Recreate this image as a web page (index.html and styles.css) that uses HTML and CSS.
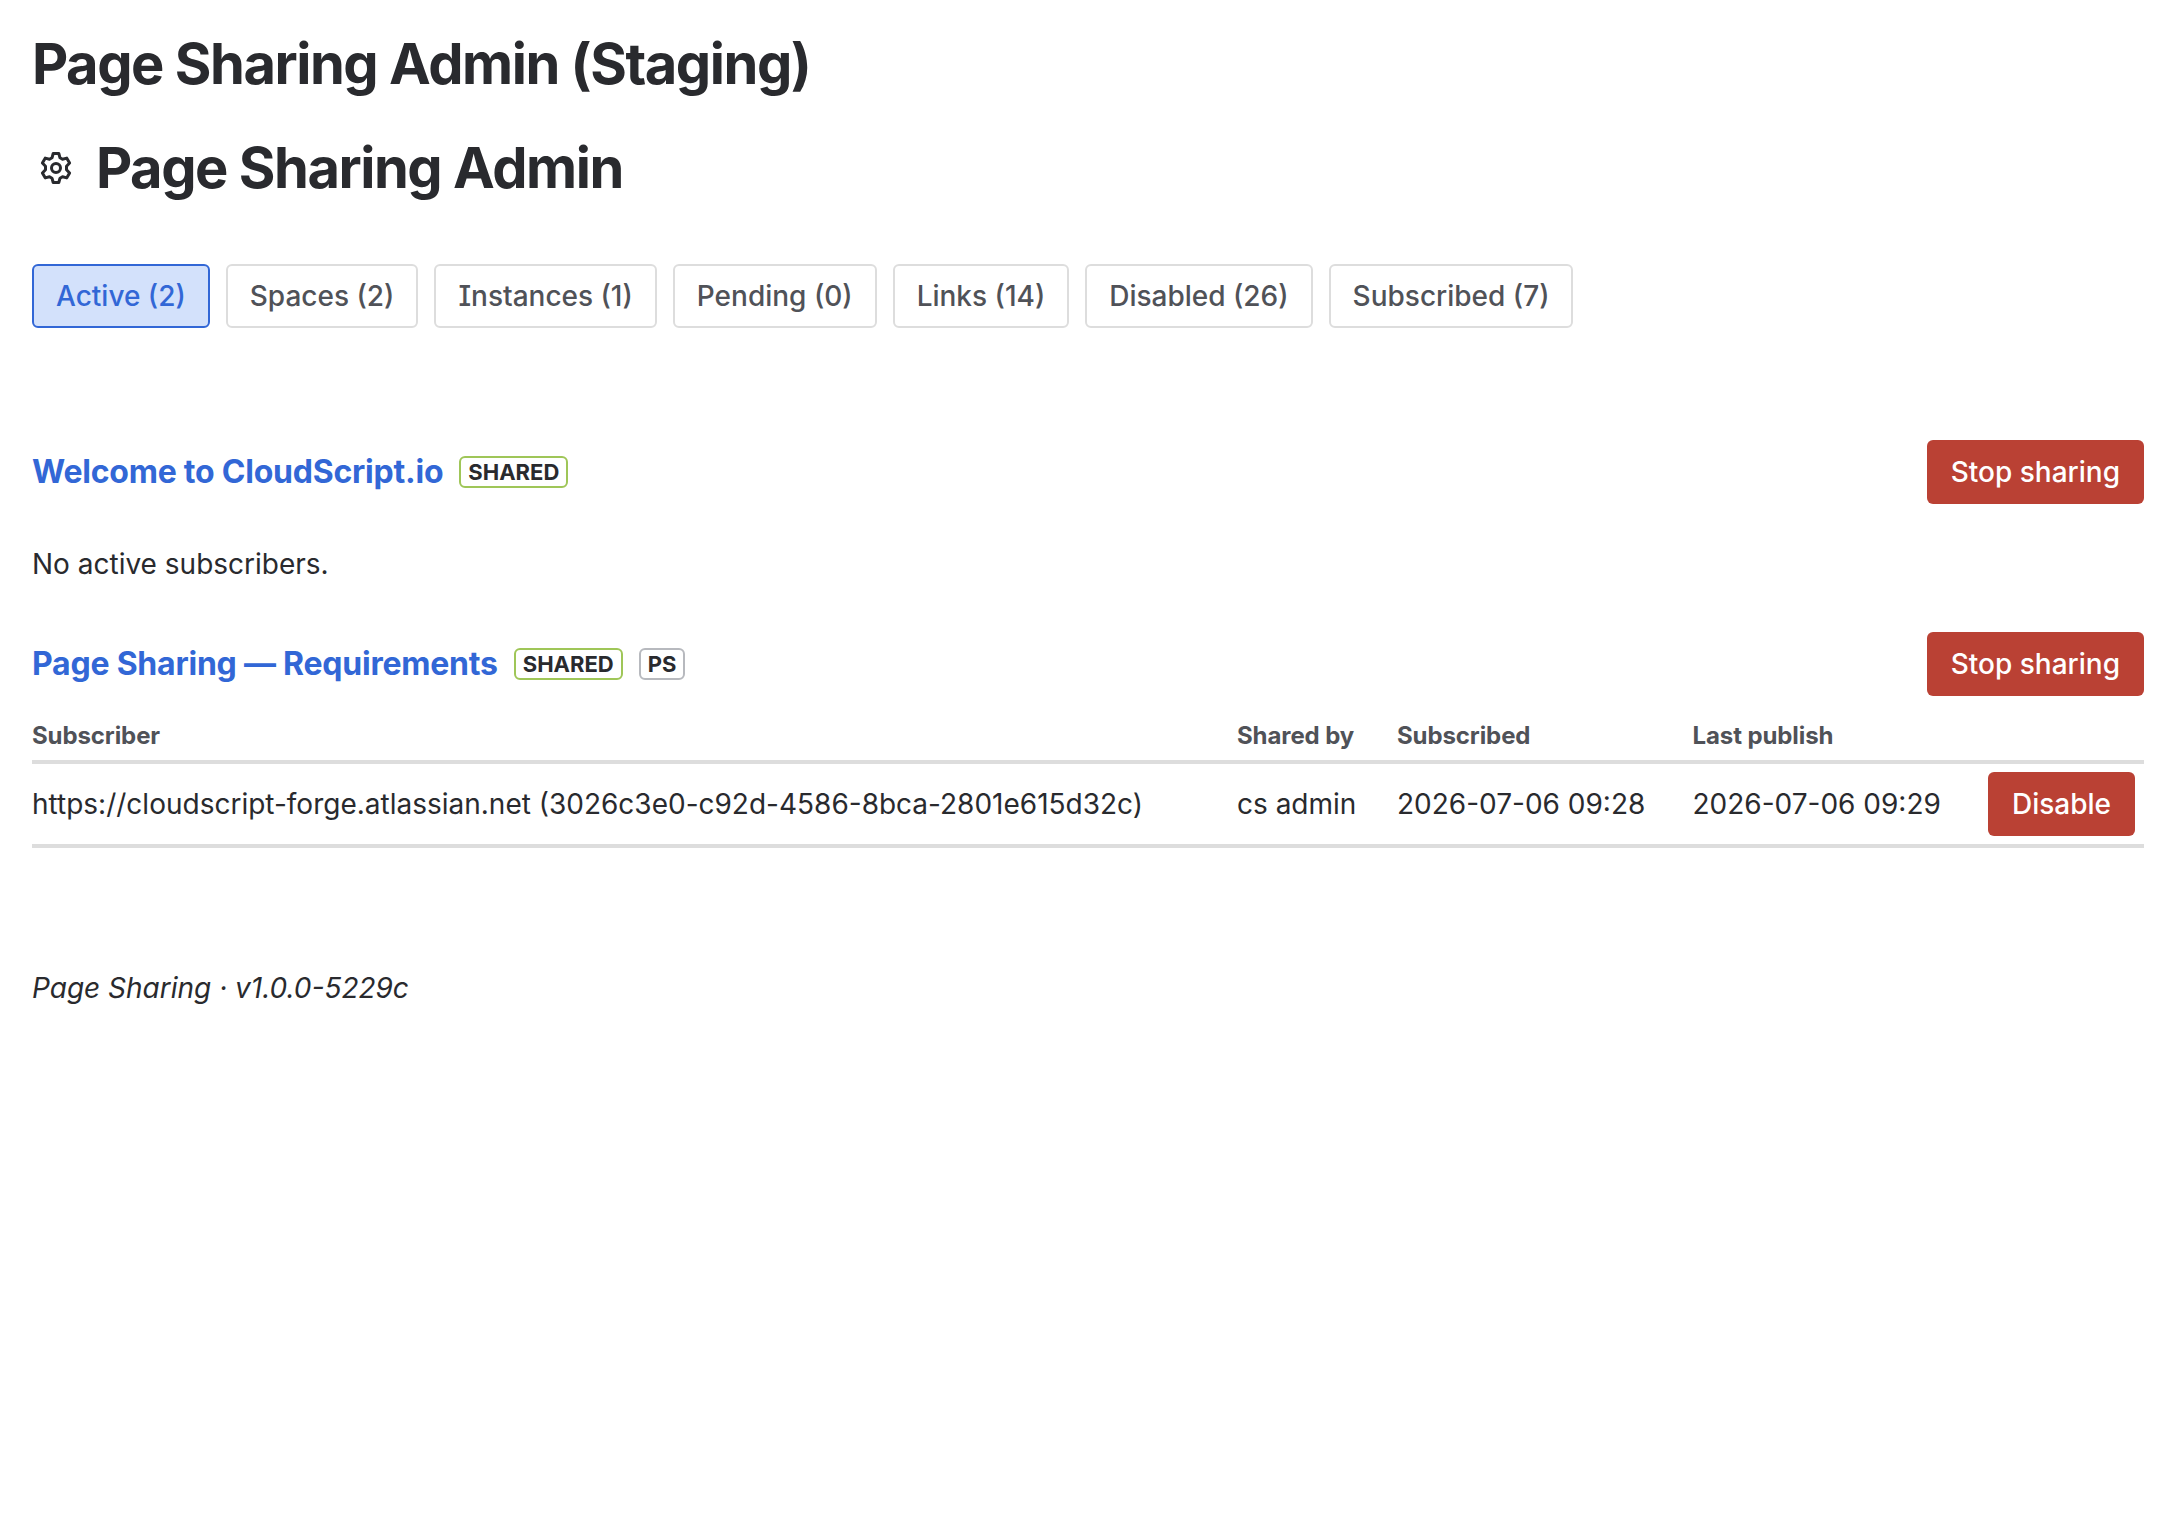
FILE: index.html
```html
<!DOCTYPE html>
<html lang="en">
<head>
	<meta charset="UTF-8" />
	<meta name="viewport" content="width=device-width, initial-scale=1.0" />
	<title>Page Sharing Admin (Staging)</title>
	<link rel="stylesheet" href="styles.css">
</head>
<body>
	<main class="app">
		<h1 class="title">Page Sharing Admin (Staging)</h1>

		<!-- Header -->
		<header class="header">
			<svg class="gear" viewBox="0 0 16 16" fill="none" stroke="currentColor" stroke-width="1.5" stroke-linejoin="round">
				<path d="M6.6 .75h2.8l.6 2.15 1.25.72 2.15-.55 1.4 2.43L13.25 7.1v1.8l1.55 1.6-1.4 2.43-2.15-.55-1.25.72-.6 2.15H6.6L6 13.1l-1.25-.72-2.15.55-1.4-2.43L2.75 8.9V7.1L1.2 5.5l1.4-2.43 2.15.55L6 2.9z" />
				<circle cx="8" cy="8" r="2.25" />
			</svg>
			<h1 class="title">Page Sharing Admin</h1>
		</header>
		<!-- End of Header -->

		<!-- Tabs -->
		<nav class="tabs">
			<button class="tab active">Active (2)</button>
			<button class="tab">Spaces (2)</button>
			<button class="tab">Instances (1)</button>
			<button class="tab">Pending (0)</button>
			<button class="tab">Links (14)</button>
			<button class="tab">Disabled (26)</button>
			<button class="tab">Subscribed (7)</button>
		</nav>
		<!-- End of Tabs -->

		<!-- Shared Pages -->
		<section class="share">
			<div class="share-head">
				<a class="share-link" href="#">Welcome to CloudScript.io</a>
				<span class="badge shared">SHARED</span>
				<button class="danger">Stop sharing</button>
			</div>
			<p class="empty">No active subscribers.</p>
		</section>

		<section class="share">
			<div class="share-head">
				<a class="share-link" href="#">Page Sharing — Requirements</a>
				<span class="badge shared">SHARED</span>
				<span class="badge">PS</span>
				<button class="danger">Stop sharing</button>
			</div>
			<table class="subscribers">
				<thead>
					<tr>
						<th class="col-subscriber">Subscriber</th>
						<th class="col-by">Shared by</th>
						<th class="col-date">Subscribed</th>
						<th class="col-date">Last publish</th>
						<th></th>
					</tr>
				</thead>
				<tbody>
					<tr>
						<td>https://cloudscript-forge.atlassian.net (3026c3e0-c92d-4586-8bca-2801e615d32c)</td>
						<td>cs admin</td>
						<td>2026-07-06 09:28</td>
						<td>2026-07-06 09:29</td>
						<td><button class="danger">Disable</button></td>
					</tr>
				</tbody>
			</table>
		</section>
		<!-- End of Shared Pages -->

		<footer class="footer">Page Sharing · v1.0.0-5229c</footer>
	</main>
</body>
</html>
```

FILE: styles.css
```css
/* Variables */
:root {
	--text: #292a2e;
	--subtle: #505258;
	--blue: #3267d6;
	--blue-light: #d3e1fb;
	--danger: #ba4134;
	--line: #dddddd;
	--lime: #9fc658;
	--grey: #b7b9be;
}
/* End of Variables */

/* Resets */
* {
	margin: 0;
	padding: 0;
	box-sizing: border-box;
}

button {
	font: inherit;
	border: none;
	cursor: pointer;
}
/* End of Resets */

body {
	background: #fff;
	color: var(--text);
	font-family: Inter, "Liberation Sans", sans-serif;
	font-size: 28px;
	line-height: 40px;
}

.app {
	padding: 32px 40px 32px 32px;
}

.title {
	font-size: 56px;
	font-weight: 700;
	line-height: 64px;
	letter-spacing: -0.026em;
}

.header {
	display: flex;
	align-items: center;
	gap: 16px;
	margin-top: 40px;
}

.gear {
	width: 32px;
	height: 32px;
	margin: 0 8px;
}

/* Tabs */
.tabs {
	display: flex;
	gap: 16px;
	margin-top: 64px;
	margin-bottom: 112px;
}

.tab {
	height: 64px;
	padding: 0 22px;
	border: 2px solid var(--line);
	border-radius: 6px;
	background: #fff;
	color: var(--subtle);
	font-weight: 500;
	font-feature-settings: "cv08";
	white-space: nowrap;
}

.tab.active {
	border-color: var(--blue);
	background: var(--blue-light);
	color: var(--blue);
}

/* Shared pages */
.share {
	margin-bottom: 48px;
}

.share-head {
	display: flex;
	align-items: center;
	gap: 16px;
}

.share-link {
	color: var(--blue);
	font-size: 32px;
	font-weight: 700;
	text-decoration: none;
	letter-spacing: -0.007em;
}

.badge {
	height: 32px;
	padding: 0 7px;
	border: 2px solid var(--grey);
	border-radius: 6px;
	font-size: 22px;
	font-weight: 700;
	line-height: 28px;
}

.badge.shared {
	border-color: var(--lime);
}

.danger {
	height: 64px;
	padding: 0 24px;
	border-radius: 6px;
	background: var(--danger);
	color: #fff;
	font-weight: 500;
}

.share-head .danger {
	margin-left: auto;
}

.empty {
	margin-top: 40px;
}

/* Subscribers table */
.subscribers {
	width: 100%;
	margin-top: 24px;
	border-collapse: separate;
	border-spacing: 0;
	table-layout: fixed;
}

.subscribers th {
	padding-bottom: 8px;
	border-bottom: 4px solid var(--line);
	color: var(--subtle);
	font-size: 24px;
	font-weight: 700;
	line-height: 32px;
	letter-spacing: -0.1px;
	text-align: left;
}

.subscribers td {
	height: 84px;
	border-bottom: 4px solid var(--line);
	vertical-align: middle;
	white-space: nowrap;
}

.subscribers .danger {
	display: block;
}

.col-subscriber {
	width: 1205px;
}

.col-by {
	width: 160px;
}

.col-date {
	width: 295.5px;
}

.subscribers th:last-child {
	width: 156px;
}

.footer {
	margin-top: 120px;
	font-style: italic;
}
```
